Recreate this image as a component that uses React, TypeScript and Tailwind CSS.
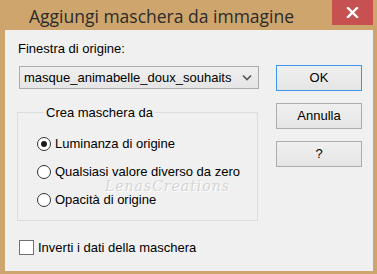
import React from 'react';

const ui = { fontFamily: '"Liberation Sans", Arial, sans-serif' };

function Radio({ checked, label }: { checked?: boolean; label: string }) {
  return (
    <div className="flex items-center h-[28px]">
      <div className="w-[14px] h-[14px] rounded-full border border-[#333] bg-white flex items-center justify-center">
        {checked && <div className="w-[6px] h-[6px] rounded-full bg-[#1a1a1a]" />}
      </div>
      <span className="ml-[4px] text-[13px] leading-[15px] text-black">{label}</span>
    </div>
  );
}

function Button({ label, primary }: { label: string; primary?: boolean }) {
  return (
    <div
      className={`w-[86px] h-[26px] flex items-center justify-center text-[13px] text-black bg-gradient-to-b from-[#f0f0f0] to-[#e5e5e5] border ${
        primary ? 'border-[#3d95eb]' : 'border-[#acacac]'
      }`}
    >
      {label}
    </div>
  );
}

export default function App() {
  return (
    <div className="w-[377px] h-[274px] bg-[#cea56c] flex flex-col" style={ui}>
      {/* title bar */}
      <div className="h-[30px] flex items-start">
        <div className="pl-[29px] pt-[3px] text-[17.5px] text-[#2b2b2b] flex-1" style={{ fontFamily: '"Open Sans", sans-serif' }}>
          Aggiungi maschera da immagine
        </div>
        <div className="w-[41px] h-[25px] mr-[4px] bg-[#c75050] flex items-center justify-center">
          <svg width="13" height="11" viewBox="0 0 13 11">
            <path d="M2 1 L11 10 M11 1 L2 10" stroke="white" strokeWidth="2.4" strokeLinecap="square" />
          </svg>
        </div>
      </div>

      {/* client */}
      <div className="flex-1 ml-[5px] mr-[4px] mb-[3px] bg-[#f0f0f0] flex relative">
        <div className="w-[266px] pl-[13px] pt-[11px]">
          <div className="text-[13px] text-black leading-[15px]">Finestra di origine:</div>
          <div className="mt-[10px] ml-[1px] w-[240px] h-[23px] border border-[#acacac] bg-gradient-to-b from-[#efefef] to-[#e5e5e5] flex items-center pl-[4px] pr-[6px]">
            <span className="flex-1 text-[13px] text-black">masque_animabelle_doux_souhaits</span>
            <svg width="10" height="7" viewBox="0 0 10 7">
              <path d="M1 1.5 L5 5.5 L9 1.5" stroke="#555" strokeWidth="1.6" fill="none" />
            </svg>
          </div>

          <fieldset className="mt-[14px] ml-[-1px] w-[241px] h-[118px] border border-[#dcdcdc] pl-[19px]">
            <legend className="ml-[7px] px-[2px] text-[13px] text-black">Crea maschera da</legend>
            <div className="mt-[7px] flex flex-col">
              <Radio checked label="Luminanza di origine" />
              <Radio label="Qualsiasi valore diverso da zero" />
              <Radio label="Opacità di origine" />
            </div>
          </fieldset>

          <div className="mt-[17px] ml-[1px] flex items-center">
            <div className="w-[15px] h-[15px] border border-[#707070] bg-white" />
            <span className="ml-[4px] text-[13px] text-black">Inverti i dati della maschera</span>
          </div>
        </div>

        <div className="pt-[35px] pl-[5px] flex flex-col gap-[12px]">
          <Button label="OK" primary />
          <Button label="Annulla" />
          <Button label="?" />
        </div>

        {/* watermark */}
        <span
          className="absolute left-[100px] top-[151px] text-[14px] leading-[10px] italic text-[#d4d4d4] tracking-[1px]"
          style={{ fontFamily: '"DejaVu Serif", serif', textShadow: '1px 1px 0 #fff' }}
        >
          LenasCreations
        </span>
      </div>
    </div>
  );
}
